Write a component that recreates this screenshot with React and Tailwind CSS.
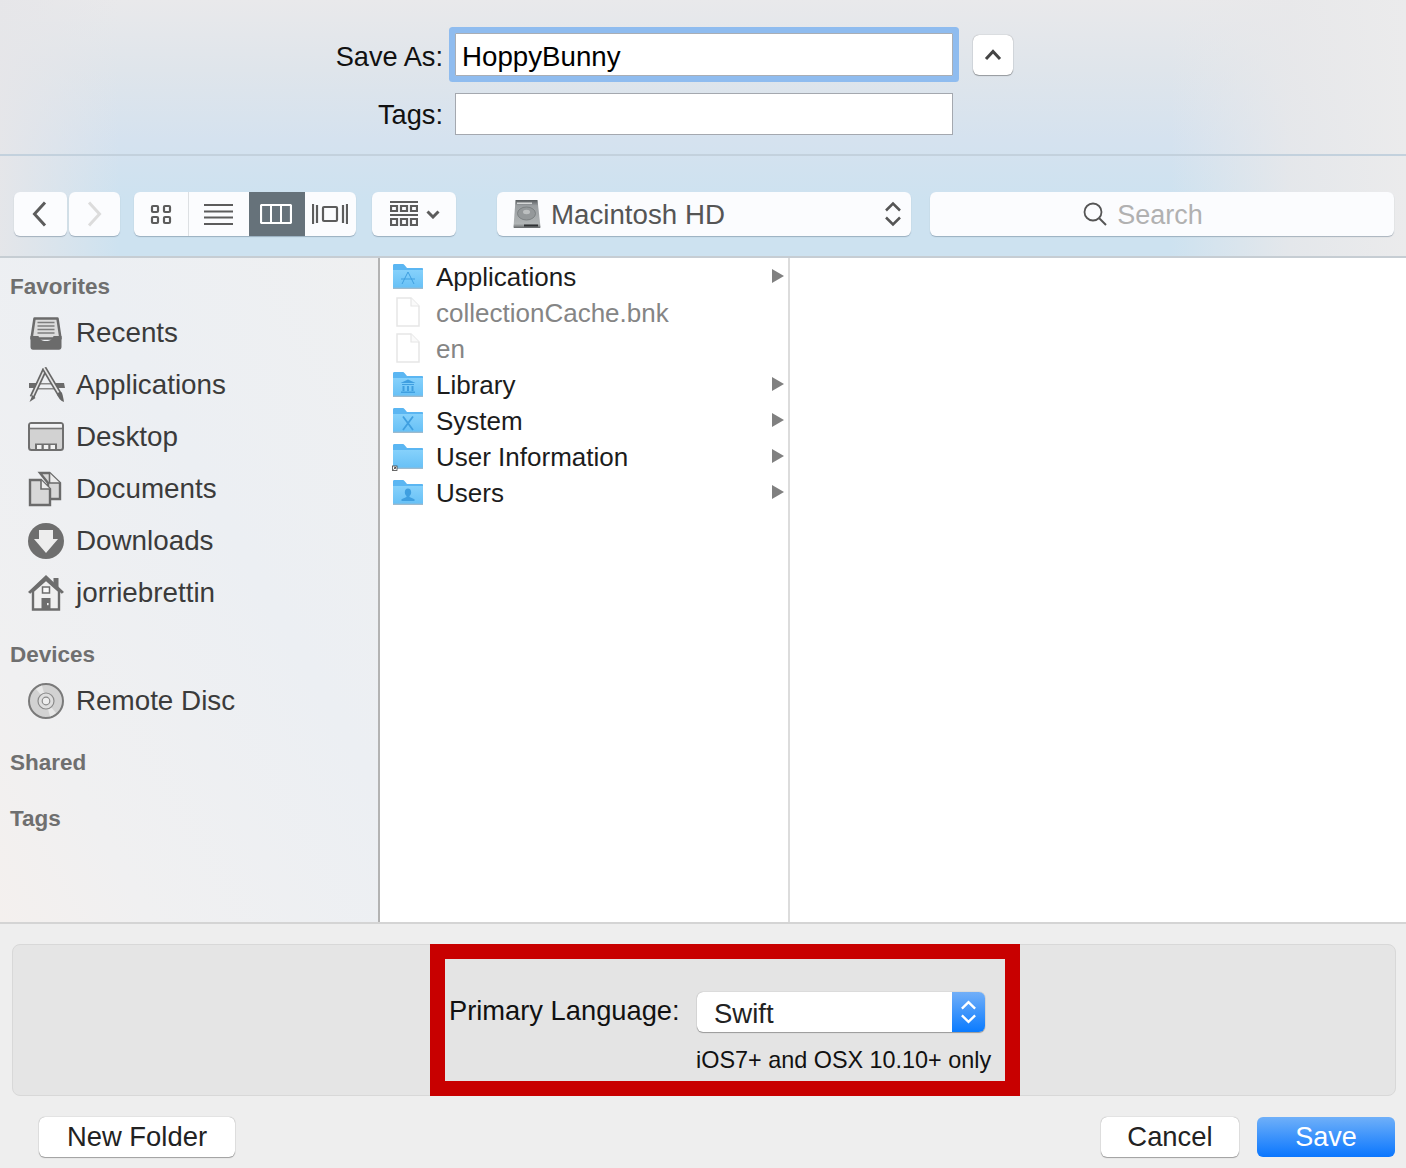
const favoritos = [
  { nome: "Recents", icone: <IconeRecents /> },
  { nome: "Applications", icone: <IconeApps /> },
  { nome: "Desktop", icone: <IconeDesktop /> },
  { nome: "Documents", icone: <IconeDocs /> },
  { nome: "Downloads", icone: <IconeDownloads /> },
  { nome: "jorriebrettin", icone: <IconeHome /> },
];

const arquivos = [
  { nome: "Applications", tipo: "apps" },
  { nome: "collectionCache.bnk", tipo: "arquivo" },
  { nome: "en", tipo: "arquivo" },
  { nome: "Library", tipo: "library" },
  { nome: "System", tipo: "system" },
  { nome: "User Information", tipo: "alias" },
  { nome: "Users", tipo: "users" },
];

function IconeRecents() {
  return (
    <svg width="36" height="36" viewBox="0 0 36 36">
      <path d="M6.500 3.500h23l3 20h-29z" fill="#dcdcdc" stroke="#6b6b6b" strokeWidth="2.500" strokeLinejoin="round" />
      <path d="M9.500 7.500h17M9.500 11h17M9.500 14.500h17M9.500 18h17" stroke="#7d7d7d" strokeWidth="1.600" />
      <path d="M2.500 21h8c1 3.500 3 5 7.500 5s6.500-1.500 7.500-5h8v11c0 1.500-1 2.800-2.500 2.800H5c-1.500 0-2.500-1.300-2.500-2.800z" fill="#6b6b6b" />
    </svg>
  );
}

function IconeApps() {
  return (
    <svg width="38" height="36" viewBox="0 0 38 36">
      <path d="M1 16h8l-2 5H1zM27 16h9l1 5h-8z" fill="#6b6b6b" />
      <path d="M11 16h16v1.500H11zM9 21h20v1.500H9z" fill="#8a8a8a" />
      <path d="M17 2 4 30" stroke="#666" strokeWidth="5" />
      <path d="M17 2 4 30" stroke="#e6e6e6" strokeWidth="1.600" />
      <path d="M4.500 28 1.500 35l6-4z" fill="#666" />
      <path d="M16 1 32 28" stroke="#666" strokeWidth="5" />
      <path d="M16 1 32 28" stroke="#e6e6e6" strokeWidth="1.600" />
      <path d="M29 27c2-2.500 4-2.500 5-1 .8 2 1.500 6 2 9-3-1-6-4-7-8z" fill="#666" />
    </svg>
  );
}

function IconeDesktop() {
  return (
    <svg width="36" height="30" viewBox="0 0 36 30">
      <rect x="1" y="1" width="34" height="27" rx="2.500" fill="#d2d2d2" stroke="#6f6f6f" strokeWidth="2" />
      <rect x="2" y="2" width="32" height="4" rx="1" fill="#f2f3f5" />
      <path d="M2 6.500h32" stroke="#777" strokeWidth="1.600" />
      <path d="M7 27.500v-6h22v6z" fill="#6f6f6f" />
      <path d="M9 23h4.500v4H9zM15.800 23h4.500v4h-4.500zM22.500 23H27v4h-4.500z" fill="#f2f2f2" />
    </svg>
  );
}

function IconeDocs() {
  return (
    <svg width="34" height="36" viewBox="0 0 34 36">
      <path d="M12 2h9.500L32 12v16H20V12z" fill="#d8d8d8" stroke="#6b6b6b" strokeWidth="2.400" />
      <path d="M21.500 2v10H32" fill="#ececec" stroke="#6b6b6b" strokeWidth="1.600" />
      <path d="M2 9h11l9 9v16H2z" fill="#d8d8d8" stroke="#6b6b6b" strokeWidth="2.400" />
      <path d="M13 9v9h9" fill="#ececec" stroke="#6b6b6b" strokeWidth="1.600" />
    </svg>
  );
}

function IconeDownloads() {
  return (
    <svg width="36" height="36" viewBox="0 0 36 36">
      <circle cx="18" cy="18" r="18" fill="#6e6e6e" />
      <path d="M11 7h14v9h5L18 30 6 16h5z" fill="#ededed" />
    </svg>
  );
}

function IconeHome() {
  return (
    <svg width="36" height="36" viewBox="0 0 36 36">
      <path d="M25.500 3h5v9h-5z" fill="#6d6d6d" />
      <path d="M5 16 18 4.500 31 16v18.500H5z" fill="#f0f0f0" stroke="#6d6d6d" strokeWidth="2.400" />
      <path d="M0 17 18 0l18 17-2.200 1.800L18 4.400 2.200 18.800z" fill="#6d6d6d" />
      <rect x="14.500" y="12" width="7" height="6" fill="#fafafa" stroke="#6d6d6d" strokeWidth="1.500" />
      <rect x="13.500" y="23" width="9" height="11.500" fill="#6d6d6d" />
      <rect x="19" y="28" width="1.600" height="2.200" fill="#eee" />
    </svg>
  );
}

function IconeDisco() {
  return (
    <svg width="36" height="36" viewBox="0 0 36 36">
      <circle cx="18" cy="18" r="17" fill="#d2d2d2" stroke="#7a7a7a" strokeWidth="2" />
      <path d="M18 18 8 6a16 16 0 0 1 6-3.500z" fill="#e8e8e8" />
      <path d="M18 18l10 12a16 16 0 0 1-6 3.500z" fill="#e8e8e8" />
      <circle cx="18" cy="18" r="8" fill="#dedede" stroke="#8a8a8a" strokeWidth="1.200" />
      <circle cx="18" cy="18" r="3.800" fill="#eee" stroke="#8a8a8a" strokeWidth="1.200" />
    </svg>
  );
}

function IconePasta({ tipo }) {
  const cor = "#3f9fe0";
  return (
    <svg width="32" height="28" viewBox="0 0 32 28" className="overflow-visible">
      <defs>
        <linearGradient id="pasta" x1="0" y1="0" x2="0" y2="1">
          <stop offset="0" stopColor="#86d1fb" />
          <stop offset="1" stopColor="#66c0f6" />
        </linearGradient>
      </defs>
      <path d="M1 2.500C1 1.500 1.500 1 2.500 1h8c1 0 1.500.5 2 1l2.500 3H30c.6 0 1 .4 1 1v18.500c0 .6-.4 1-1 1H2c-.6 0-1-.4-1-1z" fill="#5bb6f2" />
      <path d="M1 7h30v17.500c0 .6-.4 1-1 1H2c-.6 0-1-.4-1-1z" fill="url(#pasta)" />
      <path d="M1 25.300h30" stroke="#9fb9cc" strokeWidth="1.300" />
      {tipo === "apps" && (
        <path d="M16 9 10 21M16 9l6 12M9 16h14" stroke={cor} strokeWidth="1" fill="none" />
      )}
      {tipo === "library" && (
        <path d="M8.500 12 16 8.500 23.500 12zM10 13h12v1H10zM10.500 15h2v5h-2zM15 15h2v5h-2zM19.500 15h2v5h-2zM9 20.500h14V22H9z" fill={cor} />
      )}
      {tipo === "system" && (
        <path d="M11 9.500 21 23M21 9.500 11 23" stroke={cor} strokeWidth="1.800" fill="none" />
      )}
      {tipo === "users" && (
        <path d="M16 9.500c2 0 3.200 1.500 3.200 3.800s-1.200 3.200-1.700 3.700v1l5 2.300V22H9.500v-1.700l5-2.300v-1c-.5-.5-1.700-1.400-1.700-3.700s1.200-3.800 3.200-3.800z" fill={cor} />
      )}
      {tipo === "alias" && (
        <g>
          <rect x="0.500" y="23" width="4.500" height="4.500" fill="#fff" stroke="#444" strokeWidth="0.800" />
          <path d="M1.500 26.500l2-2M2 24.300h1.500v1.500" stroke="#111" strokeWidth="0.700" fill="none" />
        </g>
      )}
    </svg>
  );
}

function IconeArquivo() {
  return (
    <svg width="24" height="30" viewBox="0 0 24 30">
      <path d="M1 1h14l8 8v20H1z" fill="#fff" stroke="#e6e6e6" strokeWidth="1.500" />
      <path d="M15 1v8h8" fill="#fafafa" stroke="#e6e6e6" strokeWidth="1.200" />
    </svg>
  );
}

function IconeDisco2() {
  return (
    <svg width="30" height="30" viewBox="0 0 30 30">
      <defs>
        <linearGradient id="hd" x1="0" y1="0" x2="0" y2="1">
          <stop offset="0" stopColor="#55595c" />
          <stop offset="0.2" stopColor="#999da0" />
          <stop offset="0.85" stopColor="#b0b4b5" />
          <stop offset="1" stopColor="#65686a" />
        </linearGradient>
      </defs>
      <path d="M3.500 1h22l3 27c0 .8-.5 1-1 1h-25c-.5 0-1-.2-1-1z" fill="url(#hd)" />
      <path d="M5 3.500h15V5H5z" fill="#d4d6d7" />
      <ellipse cx="14.500" cy="14.500" rx="9" ry="6.500" fill="#94989a" stroke="#74787a" strokeWidth="0.800" />
      <ellipse cx="14.500" cy="13" rx="3.500" ry="2.200" fill="#bcbfc0" />
      <path d="M12 25.500h14v2H12z" fill="#2f3133" />
    </svg>
  );
}

function Chevron({ dir, cor = "#5c5c5c" }) {
  return (
    <svg width="15" height="26" viewBox="0 0 15 26">
      <path
        d={dir === "left" ? "M13 1.500 2.500 13 13 24.500" : "M2 1.500 12.500 13 2 24.500"}
        fill="none"
        stroke={cor}
        strokeWidth="3"
      />
    </svg>
  );
}

function Seta() {
  return (
    <svg width="14" height="16" viewBox="0 0 14 16" className="-mt-[2px]">
      <path d="M1 1v14l12-7z" fill="#808080" />
    </svg>
  );
}

function SetasSelect({ cor, largura = 18 }) {
  return (
    <svg width={largura} height="26" viewBox="0 0 18 26">
      <path d="M2 9.500 9 2.500l7 7M2 16.500l7 7 7-7" fill="none" stroke={cor} strokeWidth="2.500" />
    </svg>
  );
}

const botaoBarra = "bg-[#fbfcfe] h-[44px] rounded-[6px] shadow-[0_1px_1px_rgba(90,110,130,0.45)] flex items-center justify-center";
const botaoBase = "h-[40px] rounded-[6px] bg-white shadow-[0_0_1px_rgba(0,0,0,0.45),0_1px_1px_rgba(0,0,0,0.3)] flex items-center justify-center text-[27.400px] text-[#222]";

export default function App() {
  return (
    <div className="w-[1406px] h-[1168px] flex flex-col bg-[#eeeeee] overflow-hidden font-['Liberation_Sans',Arial,sans-serif]">
      <div className="h-[258px] shrink-0 flex flex-col bg-[linear-gradient(to_right,rgba(230,230,233,0.95)_0px,rgba(230,230,233,0)_120px,rgba(233,233,235,0)_1170px,rgba(232,232,234,0.85)_1290px,#ebebec_1406px),linear-gradient(to_bottom,#e9e9eb_0px,#dfe5eb_70px,#d5e2ef_140px,#cde2f0_200px)] border-b-2 border-[#c6cdd3]">
        {/* nome e tags */}
        <div className="h-[156px] shrink-0 border-b-2 border-[#c3d1dd] pt-[33px] flex flex-col gap-[17px]">
          <div className="flex items-center h-[43px]">
            <div className="w-[443px] pt-[6px] text-right text-[27.200px] text-[#111]">Save As:</div>
            <div className="ml-[12px] w-[498px] h-[43px] bg-white border border-[#a9aeb5] ring-[6px] ring-[#8fbcef] rounded-[1px] flex items-center pl-[6px] pt-[5px] text-[27.700px] text-black">
              HoppyBunny
            </div>
            <div className={`ml-[20px] w-[40px] h-[40px] ${botaoBase}`}>
              <svg width="18" height="12" viewBox="0 0 18 12">
                <path d="M2 10 9 2.500l7 7.500" fill="none" stroke="#444" strokeWidth="3" />
              </svg>
            </div>
          </div>
          <div className="flex items-center h-[42px]">
            <div className="w-[443px] pt-[2px] text-right text-[27.200px] text-[#111]">Tags:</div>
            <div className="ml-[12px] w-[498px] h-[42px] bg-white border border-[#a4a8af]" />
          </div>
        </div>

        {/* barra de ferramentas */}
        <div className="pt-[36px] pl-[14px] flex items-start">
          <div className={`${botaoBarra} w-[53px] pr-[3px]`}><Chevron dir="left" /></div>
          <div className={`${botaoBarra} w-[51px] ml-[2px]`}><Chevron dir="right" cor="#dcdcdc" /></div>

          <div className={`${botaoBarra} ml-[14px] w-[222px] !justify-start overflow-hidden`}>
            <div className="w-[55px] h-full flex items-center justify-center border-r border-[#dde0e3]">
              <svg width="22" height="21" viewBox="0 0 22 21">
                <g fill="none" stroke="#5c5c5c" strokeWidth="2.200">
                  <rect x="2" y="2" width="6" height="6" rx="1" />
                  <rect x="14" y="2" width="6" height="6" rx="1" />
                  <rect x="2" y="13" width="6" height="6" rx="1" />
                  <rect x="14" y="13" width="6" height="6" rx="1" />
                </g>
              </svg>
            </div>
            <div className="w-[60px] h-full flex items-center justify-center pr-[2px]">
              <svg width="29" height="21" viewBox="0 0 29 21">
                <path d="M0 1h29M0 7.500h29M0 13.500h29M0 20h29" stroke="#5c5c5c" strokeWidth="2" />
              </svg>
            </div>
            <div className="w-[56px] h-full flex items-center justify-center bg-[#66727a] pr-[2px]">
              <svg width="32" height="20" viewBox="0 0 32 20">
                <rect x="1" y="1" width="30" height="18" rx="1" fill="none" stroke="#fff" strokeWidth="2.200" />
                <path d="M11 1v18M21 1v18" stroke="#fff" strokeWidth="2" />
              </svg>
            </div>
            <div className="w-[51px] h-full flex items-center justify-center pr-[2px]">
              <svg width="36" height="20" viewBox="0 0 36 20">
                <g stroke="#5c5c5c" fill="none" strokeWidth="2.200">
                  <rect x="11" y="3" width="14" height="14" rx="1" />
                  <path d="M1 0v20M35 0v20M5 1v18M31 1v18" />
                </g>
              </svg>
            </div>
          </div>

          <div className={`${botaoBarra} ml-[16px] w-[84px] gap-[8px] pl-[2px]`}>
            <svg width="28" height="26" viewBox="0 0 28 26">
              <g stroke="#5c5c5c" fill="none">
                <path d="M0 1h28M0 14h28" strokeWidth="2" />
                <path d="M1 5h6v5H1zM11 5h6v5h-6zM21 5h6v5h-6zM1 18h6v6H1zM11 18h6v6h-6zM21 18h6v6h-6z" strokeWidth="2.200" />
              </g>
            </svg>
            <svg width="14" height="9" viewBox="0 0 14 9">
              <path d="M1.500 1.500 7 7l5.500-5.500" fill="none" stroke="#5c5c5c" strokeWidth="3" />
            </svg>
          </div>

          <div className={`${botaoBarra} ml-[41px] w-[414px] !justify-start pl-[15px] pr-[9px]`}>
            <IconeDisco2 />
            <span className="ml-[9px] pt-[2px] text-[27.700px] text-[#555] flex-1">Macintosh HD</span>
            <SetasSelect cor="#555" />
          </div>

          <div className={`${botaoBarra} ml-[19px] w-[464px] gap-[10px] pr-[38px]`}>
            <svg width="24" height="24" viewBox="0 0 24 24">
              <circle cx="10" cy="10" r="8.500" fill="none" stroke="#555" strokeWidth="1.800" />
              <path d="m16 16 7 7" stroke="#555" strokeWidth="2" />
            </svg>
            <span className="pt-[2px] text-[27px] text-[#b1b1b1]">Search</span>
          </div>
        </div>
      </div>

      <div className="h-[664px] shrink-0 flex">
        {/* barra lateral */}
        <div className="w-[380px] shrink-0 border-r-2 border-[#b3b3b3] pt-[14px] bg-[linear-gradient(to_top_right,#f4f0ee_0%,#f0f0f1_20%,#eceff3_60%,#eff0f1_100%)]">
          <Titulo>Favorites</Titulo>
          <div className="mt-[7px] mb-[21px]">
            {favoritos.map((item) => (
              <ItemLateral key={item.nome} {...item} />
            ))}
          </div>
          <Titulo>Devices</Titulo>
          <div className="mt-[7px] mb-[21px]">
            <ItemLateral nome="Remote Disc" icone={<IconeDisco />} />
          </div>
          <Titulo>Shared</Titulo>
          <div className="mt-[28px]">
            <Titulo>Tags</Titulo>
          </div>
        </div>

        {/* coluna de arquivos */}
        <div className="w-[410px] shrink-0 bg-white border-r-2 border-[#dcdcdc] pt-px">
          {arquivos.map((item) => (
            <div key={item.nome} className="h-[36px] flex items-center pl-[12px] pr-[3px]">
              <div className="w-[44px] shrink-0 flex items-center">
                {item.tipo === "arquivo" ? (
                  <div className="pl-[4px] -mt-[2px] flex"><IconeArquivo /></div>
                ) : (
                  <IconePasta tipo={item.tipo} />
                )}
              </div>
              <span className={`flex-1 text-[26px] ${item.tipo === "arquivo" ? "text-[#858585]" : "text-[#1c1c1c]"}`}>
                {item.nome}
              </span>
              {item.tipo !== "arquivo" && <Seta />}
            </div>
          ))}
        </div>

        <div className="flex-1 bg-white" />
      </div>

      {/* rodapé */}
      <div className="flex-1 border-t-2 border-[#d4d4d4] px-[10px] pt-[20px] flex flex-col">
        <div className="ml-[2px] h-[152px] w-[1384px] bg-[#e5e5e5] border border-[#d8d8d8] rounded-[8px] shrink-0">
          <div className="ml-[417px] -mt-px h-[152px] w-[590px] border-[15px] border-[#c80000] bg-[#e4e4e4] pt-[33px]">
            <div className="flex items-center h-[40px]">
              <span className="ml-[4px] w-[248px] shrink-0 text-[27.300px] text-[#111] -mt-[1px]">Primary Language:</span>
              <div className="w-[288px] h-[40px] bg-white rounded-[6px] flex overflow-hidden shadow-[0_0_1px_rgba(0,0,0,0.4),0_1px_1px_rgba(0,0,0,0.3)]">
                <span className="flex-1 pl-[17px] text-[27.500px] text-[#222] leading-[43px]">Swift</span>
                <div className="w-[33px] flex items-center justify-center bg-[linear-gradient(#72aff8,#0a7bff)]">
                  <SetasSelect cor="#fff" largura={17} />
                </div>
              </div>
            </div>
            <div className="ml-[251px] mt-[14px] text-[23.400px] leading-[28px] text-[#111] whitespace-nowrap">
              iOS7+ and OSX 10.10+ only
            </div>
          </div>
        </div>
        <div className="mt-[21px] flex">
          <div className={`${botaoBase} ml-[29px] w-[196px]`}>New Folder</div>
          <div className={`${botaoBase} ml-auto w-[138px]`}>Cancel</div>
          <div className="ml-[18px] mr-[1px] w-[138px] h-[40px] rounded-[6px] bg-[linear-gradient(#6fb0f9,#0a76fe)] flex items-center justify-center text-[27px] text-white">
            Save
          </div>
        </div>
      </div>
    </div>
  );
}

function Titulo({ children }) {
  return (
    <div className="h-[28px] pl-[10px] pt-[2px] flex items-center text-[22.500px] font-bold text-[#6f6f6f]">
      {children}
    </div>
  );
}

function ItemLateral({ nome, icone }) {
  return (
    <div className="h-[52px] flex items-center">
      <div className="w-[76px] pl-[28px] shrink-0 flex items-center">{icone}</div>
      <span className="text-[27.800px] text-[#3b3b3b]">{nome}</span>
    </div>
  );
}
